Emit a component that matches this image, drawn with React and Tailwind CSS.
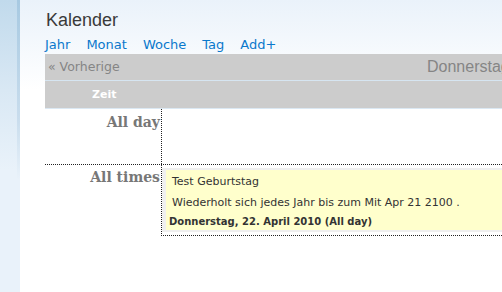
export default function App() {
  const sans = { fontFamily: '"DejaVu Sans", Verdana, sans-serif' };
  return (
    <div className="flex w-[502px] h-[292px] overflow-hidden bg-white">
      <div className="flex shrink-0 w-[20px]">
        <div className="w-[17px] bg-[linear-gradient(to_bottom,#c1daec_0px,#d9e8f4_90px,#e9f2fa_170px)]" />
        <div className="w-[3px] bg-[linear-gradient(to_bottom,#a7c9e1_0px,#c9dded_120px,#e9f2fa_180px)]" />
      </div>
      <div className="flex-1 min-w-0 pl-[25px] bg-[linear-gradient(to_bottom,#eaf2fa_0px,#ffffff_90px)]">
        <h1 className="pt-[10px] pl-[1px] text-[18px] leading-[20px] text-[#3a3a3a] font-['Liberation_Sans',Arial,sans-serif]">
          Kalender
        </h1>
        <nav className="mt-[7px] flex gap-[16px] text-[13px] leading-[16px] text-[#0a78cc]" style={sans}>
          <a>Jahr</a>
          <a>Monat</a>
          <a>Woche</a>
          <a>Tag</a>
          <a>Add+</a>
        </nav>
        <div className="mt-[1px] w-full">
          <div className="flex h-[27px] items-center overflow-hidden whitespace-nowrap bg-[#cccccc] border-b border-[#d6e5f1]">
            <div className="w-[382px] shrink-0 pl-[3px] pt-[1px] text-[12.5px] text-[#858585]" style={sans}>
              « Vorherige
            </div>
            <div className="shrink-0 text-[16px] text-[#858585] font-['Liberation_Sans',Arial,sans-serif]">
              Donnerstag, 22. April 2010
            </div>
          </div>
          <div className="flex h-[28px] items-center bg-[#cccccc] border-b border-[#dbe8f3]">
            <div className="pl-[47px] pt-[2px] text-[11px] font-bold text-white" style={sans}>
              Zeit
            </div>
          </div>
          <div className="flex h-[56px] border-b border-dotted border-[#222]">
            <div className="w-[116px] shrink-0 pt-[5px] pr-[1px] text-right text-[14px] leading-[17px] font-bold text-[#777] font-['DejaVu_Serif',serif]">
              All day
            </div>
            <div className="flex-1 border-l border-dotted border-[#222]" />
          </div>
          <div className="flex">
            <div className="w-[116px] shrink-0 pt-[4px] pr-[1px] text-right text-[14px] leading-[17px] font-bold text-[#777] font-['DejaVu_Serif',serif]">
              All times
            </div>
            <div className="flex-1 border-l border-b border-dotted border-[#222] pt-[3px] pb-[3px]">
              <div className="bg-[#efefef] pt-[2px] pb-[2px] pl-[4px]">
                <div className="bg-[#ffffcc] h-[60px] text-[#333]" style={sans}>
                  <div className="pl-[6px] pt-[5px] text-[11px] leading-[13px] whitespace-nowrap">Test Geburtstag</div>
                  <div className="pl-[6px] mt-[8px] text-[11px] leading-[13px] whitespace-nowrap">
                    Wiederholt sich jedes Jahr bis zum Mit Apr 21 2100 .
                  </div>
                  <div className="pl-[3px] mt-[7px] text-[10px] leading-[12px] font-bold whitespace-nowrap">
                    Donnerstag, 22. April 2010 (All day)
                  </div>
                </div>
              </div>
            </div>
          </div>
        </div>
      </div>
    </div>
  );
}
